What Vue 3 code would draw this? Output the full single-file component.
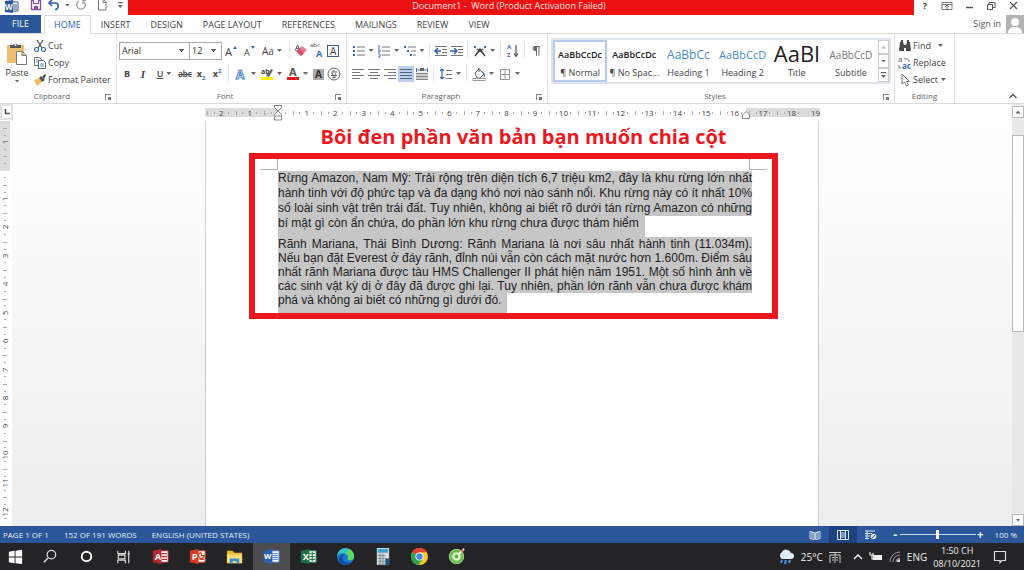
<script setup>
import { ref } from 'vue'

const tabs = ['HOME', 'INSERT', 'DESIGN', 'PAGE LAYOUT', 'REFERENCES', 'MAILINGS', 'REVIEW', 'VIEW']
const activeTab = ref('HOME')
const zoom = ref(50)
const fontName = ref('Arial')
const fontSize = ref('12')

// 14x14 glyphs used by the ribbon
const icons = {
  cut: '<path d="M4 1l5 8M10 1L5 9" stroke="#555" stroke-width="1.3" fill="none"/><circle cx="3.5" cy="10.5" r="2" stroke="#3b6db5" stroke-width="1.2" fill="none"/><circle cx="10.5" cy="10.5" r="2" stroke="#3b6db5" stroke-width="1.2" fill="none"/>',
  copy: '<path d="M1.500 1.500h5l2 2v6h-7z" fill="#fff" stroke="#777"/><path d="M5.500 4.500h5l2 2v6h-7z" fill="#fff" stroke="#666"/><path d="M7 8h4M7 10h4M3 4h2M3 6h2" stroke="#5b87c5"/>',
  painter: '<path d="M1 7l5-2 3 4-5 4z" fill="#f2bd62"/><path d="M6 5l2-2 4 4-3 2z" fill="#555"/><path d="M9 4l3-3 1 1-2 4z" fill="#444"/>',
  grow: '<text x="1" y="12" font-size="11" fill="#444">A</text><path d="M9 5l2-3 2 3z" fill="#3b6db5"/>',
  shrink: '<text x="2" y="12" font-size="9" fill="#444">A</text><path d="M9 2h4l-2 3z" fill="#3b6db5"/>',
  erase: '<path d="M2 7l6-5 5 4-6 6z" fill="#e8798a"/><path d="M2 7l3-2 5 4-3 3z" fill="#d44f66"/><path d="M1 7l2.500-6L6 6M2 4.500h3" stroke="#666" fill="none"/>',
  phonetic: '<text x="0" y="3" font-size="6" fill="#444">abc</text><text x="6" y="13" font-size="9" font-weight="bold" fill="#3b6db5">A</text>',
  charBorder: '<rect x="1.500" y="1.500" width="11" height="11" fill="#fff" stroke="#3f5f8f"/><text x="4" y="11" font-size="10" fill="#333">A</text>',
  effects: '<text x="2" y="12" font-size="12" font-weight="bold" fill="#fff" stroke="#4a86cc" stroke-width="1">A</text>',
  highlight: '<text x="1" y="7" font-size="7" font-weight="bold" fill="#444">ab</text><path d="M6 9l5-7 2 1-4 7z" fill="#666"/><rect x="1" y="10" width="12" height="3" fill="#fff200"/>',
  fontColor: '<text x="3" y="9" font-size="11" font-weight="bold" fill="#555">A</text><rect x="1" y="10" width="12" height="3" fill="#e01b1b"/>',
  charShade: '<rect x="2" y="2" width="11" height="11" fill="#a8a8a8"/><text x="4" y="11" font-size="10" font-weight="bold" fill="#333">A</text>',
  enclose: '<circle cx="7" cy="7" r="6" fill="#fff" stroke="#666"/><path d="M4 5h6M7 3v2M5 6l1 2M9 6l-1 2M4 8.500h6M7 8.500v3M5 11l4-1" stroke="#666" fill="none"/>',
  bullets: '<path d="M1 2h2v2h-2zM1 6h2v2h-2zM1 10h2v2h-2z" fill="#3b6db5"/><path d="M5 3h8M5 7h8M5 11h8" stroke="#777"/>',
  numbers: '<path d="M2 1v4M1 6h2v2h-2M1 10h2v3h-2" stroke="#3b6db5" fill="none"/><path d="M5 3h8M5 7h8M5 11h8" stroke="#777"/>',
  multi: '<path d="M1 2h2v2h-2zM4 6h2v2h-2zM7 10h2v2h-2z" fill="#3b6db5"/><path d="M5 3h8M8 7h5M10 11h3" stroke="#777"/>',
  outdent: '<path d="M1 2.500h12M8 5.500h5M8 8.500h5M1 11.500h12" stroke="#777"/><path d="M7 7H2M4 4L1 7l3 3" stroke="#2f62b0" stroke-width="1.500" fill="none"/>',
  indent: '<path d="M1 2.500h12M8 5.500h5M8 8.500h5M1 11.500h12" stroke="#777"/><path d="M0 7h6M4 4l3 3-3 3" stroke="#2f62b0" stroke-width="1.500" fill="none"/>',
  asian: '<path d="M2 12l5-7 5 7M4 5l6 4M10 5L4 9" stroke="#444" stroke-width="1.500" fill="none"/><path d="M1 2h2v2h-2zM11 2h2v2h-2z" fill="#3b6db5"/>',
  sort: '<text x="1" y="5" font-size="6" font-weight="bold" fill="#3b6db5">A</text><text x="1" y="13" font-size="6" font-weight="bold" fill="#7d5fb0">Z</text><path d="M10 1v11M8 9.500l2 3 2-3" stroke="#555" stroke-width="1.200" fill="none"/>',
  pilcrow: '<path d="M11 2.500H6a2 2 0 0 0 0 4h1.500M7.500 2.500v9M10 2.500v9" stroke="#666" fill="none"/><path d="M5 3h2v3h-2z" fill="#666"/>',
  left: '<path d="M1 2.500h12M1 5.500h8M1 8.500h12M1 11.500h8" stroke="#777"/>',
  center: '<path d="M1 2.500h12M3 5.500h8M1 8.500h12M3 11.500h8" stroke="#777"/>',
  right: '<path d="M1 2.500h12M5 5.500h8M1 8.500h12M5 11.500h8" stroke="#777"/>',
  justify: '<path d="M1 2.500h12M1 5.500h12M1 8.500h12M1 11.500h12" stroke="#56657a"/>',
  distribute: '<path d="M1 5.500h12v7H1z" fill="#ccc"/><path d="M1 6.500h12M1 9.500h12M1 12.500h12" stroke="#888"/><path d="M1.500 1v4M12.500 1v4M2 3h10" stroke="#4c6fa5"/><path d="M5 1h4v3h-4z" fill="#666"/>',
  spacing: '<path d="M3 2v10M1 4l2-2 2 2M1 10l2 2 2-2" stroke="#3b6db5" stroke-width="1.200" fill="none"/><path d="M7 3.500h6M7 7.500h6M7 11.500h6" stroke="#777"/>',
  shading: '<path d="M3 6l4-4 5 5-4 4H5z" fill="#fff" stroke="#666"/><path d="M7 5V1" stroke="#555"/><path d="M11 5c2 1 2 3 2 5l-2-2z" fill="#2f62b0"/><rect x="1" y="11.500" width="12" height="2" fill="#fff" stroke="#999"/>',
  borders: '<path d="M2 2.500h10M2 12.500h10M2.500 2v11M11.500 2v11M2 7.500h10M7 2v11" stroke="#999"/>',
  find: '<path d="M2 3h3l1 3h2l1-3h3l1 9H8V9H6v3H1z" fill="#4a4a4a"/><path d="M3 1h2v2H3zM9 1h2v2H9z" fill="#4a4a4a"/>',
  replace: '<text x="0" y="6" font-size="8" fill="#555">a</text><text x="4" y="13" font-size="8" font-weight="bold" fill="#3b6db5">ac</text><path d="M6 3c3-1 5 0 5 3M1 9v3h2" stroke="#777" fill="none"/>',
  select: '<path d="M4 1v10l2.500-2 2 4 2-1-2-3.500h3z" fill="#fff" stroke="#777"/>',
}

const fontRow1 = [
  { icon: 'grow', label: 'Grow Font', w: 'w18' },
  { icon: 'shrink', label: 'Shrink Font', w: 'w18' },
  { text: 'Aa', label: 'Change Case', w: 'w28', drop: true, cls: 'case' },
  { sep: true },
  { icon: 'erase', label: 'Clear Formatting', w: 'w16' },
  { icon: 'phonetic', label: 'Phonetic Guide', w: 'w16' },
  { icon: 'charBorder', label: 'Character Border', w: 'w16' },
]
const fontRow2 = [
  { text: 'B', label: 'Bold', w: 'w16', cls: 'bold' },
  { text: 'I', label: 'Italic', w: 'w16', cls: 'italic' },
  { text: 'U', label: 'Underline', w: 'w26', drop: true, cls: 'under' },
  { text: 'abc', label: 'Strikethrough', w: 'w16', cls: 'strike' },
  { text: 'x', sub: '2', label: 'Subscript', w: 'w16', cls: 'bold' },
  { text: 'x', sup: '2', label: 'Superscript', w: 'w16', cls: 'bold' },
  { sep: true },
  { icon: 'effects', label: 'Text Effects', w: 'w26', drop: true },
  { icon: 'highlight', label: 'Highlight Color', w: 'w26', drop: true },
  { icon: 'fontColor', label: 'Font Color', w: 'w26', drop: true },
  { icon: 'charShade', label: 'Character Shading', w: 'w16' },
  { icon: 'enclose', label: 'Enclose Characters', w: 'w16' },
]
const paraRow1 = [
  { icon: 'bullets', label: 'Bullets', w: 'w26', drop: true },
  { icon: 'numbers', label: 'Numbering', w: 'w26', drop: true },
  { icon: 'multi', label: 'Multilevel List', w: 'w26', drop: true },
  { sep: true },
  { icon: 'outdent', label: 'Decrease Indent', w: 'w16' },
  { icon: 'indent', label: 'Increase Indent', w: 'w16' },
  { sep: true },
  { icon: 'asian', label: 'Asian Layout', w: 'w26', drop: true },
  { sep: true },
  { icon: 'sort', label: 'Sort', w: 'w18' },
  { sep: true },
  { icon: 'pilcrow', label: 'Show Marks', w: 'w16' },
]
const paraRow2 = [
  { icon: 'left', label: 'Align Left', w: 'w16' },
  { icon: 'center', label: 'Center', w: 'w16' },
  { icon: 'right', label: 'Align Right', w: 'w16' },
  { icon: 'justify', label: 'Justify', w: 'w16', cls: 'on' },
  { icon: 'distribute', label: 'Distributed', w: 'w16' },
  { sep: true },
  { icon: 'spacing', label: 'Line Spacing', w: 'w26', drop: true },
  { sep: true },
  { icon: 'shading', label: 'Shading', w: 'w26', drop: true },
  { icon: 'borders', label: 'Borders', w: 'w26', drop: true },
]
const toolGroups = [
  { name: 'Font', rows: [fontRow1, fontRow2] },
  { name: 'Paragraph', rows: [paraRow1, paraRow2] },
]

const styles = [
  { sample: 'AaBbCcDc', name: '¶ Normal', cls: 'normal' },
  { sample: 'AaBbCcDc', name: '¶ No Spac...', cls: 'normal' },
  { sample: 'AaBbCc', name: 'Heading 1', cls: 'heading' },
  { sample: 'AaBbCcD', name: 'Heading 2', cls: 'heading2' },
  { sample: 'AaBl', name: 'Title', cls: 'title' },
  { sample: 'AaBbCcD', name: 'Subtitle', cls: 'subtitle' },
]
const activeStyle = ref('¶ Normal')

// ruler labels, zero is the left margin
const hMarks = Array.from({ length: 21 }, (_, i) => Math.abs(i - 2))
const vMarks = Array.from({ length: 14 }, (_, i) => Math.abs(i - 1))

const paragraphs = [
  [
    'Rừng Amazon, Nam Mỹ: Trải rộng trên diện tích 6,7 triệu km2, đây là khu rừng lớn nhất',
    'hành tinh với độ phức tạp và đa dạng khó nơi nào sánh nổi. Khu rừng này có ít nhất 10%',
    'số loài sinh vật trên trái đất. Tuy nhiên, không ai biết rõ dưới tán rừng Amazon có những',
    'bí mật gì còn ẩn chứa, do phần lớn khu rừng chưa được thám hiểm',
  ],
  [
    'Rãnh Mariana, Thái Bình Dương: Rãnh Mariana là nơi sâu nhất hành tinh (11.034m).',
    'Nếu bạn đặt Everest ở đáy rãnh, đỉnh núi vẫn còn cách mặt nước hơn 1.600m. Điểm sâu',
    'nhất rãnh Mariana được tàu HMS Challenger II phát hiện năm 1951. Một số hình ảnh về',
    'các sinh vật kỳ dị ở đây đã được ghi lại. Tuy nhiên, phần lớn rãnh vẫn chưa được khám',
    'phá và không ai biết có những gì dưới đó.',
  ],
]

const apps = [
  { name: 'Start', svg: '<path d="M3 5l6-1v6H3zM10 4l7-1v7h-7zM3 11h6v6l-6-1zM10 11h7v7l-7-1z" fill="#fff"/>' },
  { name: 'Search', svg: '<circle cx="12" cy="8" r="4.500" fill="none" stroke="#ddd" stroke-width="1.300"/><path d="M8.500 11.500L4 16" stroke="#ddd" stroke-width="1.500"/>' },
  { name: 'Cortana', svg: '<circle cx="10" cy="10" r="5" fill="none" stroke="#fff" stroke-width="2"/>' },
  { name: 'Task View', svg: '<path d="M4 4v3h8V4M4 17v-3h8v3M4.500 8.500h7v4h-7zM15.500 4v2M15.500 9v8" fill="none" stroke="#ddd" stroke-width="1.200"/><path d="M14.500 6h2v3h-2z" fill="#ddd"/>' },
  { name: 'Access', svg: '<path d="M9 4h9v12H9z" fill="#fff" stroke="#c22f38"/><path d="M11 7h6M11 10h6M11 13h6" stroke="#c22f38" stroke-width="1.500"/><path d="M2 4l9-2v16l-9-2z" fill="#b72832"/><text x="4" y="14" font-size="10" font-weight="bold" fill="#fff">A</text>' },
  { name: 'PowerPoint', svg: '<path d="M9 4h9v12H9z" fill="#fff" stroke="#e0482a"/><path d="M14 6v3h3a3 3 0 1 1-3-3M12 13h5" stroke="#d24726" stroke-width="1.300" fill="none"/><path d="M2 4l9-2v16l-9-2z" fill="#d83b22"/><text x="4" y="14" font-size="10" font-weight="bold" fill="#fff">P</text>' },
  { name: 'Explorer', svg: '<path d="M2 4h6l2 2h8v11H2z" fill="#e9b93c"/><path d="M2 8h16v9H2z" fill="#fbdc73"/><path d="M5 17v-5h10v5h-3v-2H8v2z" fill="#3f8fd6"/>' },
  { name: 'Word', svg: '<path d="M9 4h9v12H9z" fill="#fff" stroke="#3f74c4"/><path d="M11 7h6M11 9h6M11 11h6M11 13h6" stroke="#3f74c4"/><path d="M2 4l9-2v16l-9-2z" fill="#2b62b5"/><text x="2" y="13" font-size="8" font-weight="bold" fill="#fff">W</text>', active: true },
  { name: 'Excel', svg: '<path d="M9 4h9v12H9z" fill="#fff" stroke="#2a8a55"/><path d="M11 7h6M11 10h6M11 13h6M14 5v10" stroke="#2a8a55" stroke-width="1.300"/><path d="M2 4l9-2v16l-9-2z" fill="#1e7145"/><text x="4" y="14" font-size="10" font-weight="bold" fill="#fff">X</text>' },
  { name: 'Edge', svg: '<circle cx="10" cy="10" r="9" fill="#1779cf"/><path d="M1 10a9 9 0 0 1 18 0c0 4-5 5-7 3 2-2 1-5-2-6-4-1-8 0-9 3z" fill="#39c6c0"/><path d="M10 7c3 1 4 4 2 6 2 2 7 1 7-3a9 9 0 0 0-5-8z" fill="#63d85e"/><path d="M7 11c0 4 4 6 9 5-4 5-12 3-13-3 0-3 3-6 7-6-2 1-3 2-3 4z" fill="#134f9e"/>' },
  { name: 'Calculator', svg: '<path d="M4 1h13v18H4z" fill="#d8dde0"/><path d="M5 2h11v4H5z" fill="#3ca0cc"/><path d="M5 9h8M5 12h8M5 15h8M5 18h8M7.500 7v12M10.500 7v12" stroke="#7b8790"/><path d="M13 12h4v7h-4z" fill="#25507e"/>' },
  { name: 'Chrome', svg: '<circle cx="10" cy="10" r="9" fill="#fbc926"/><path d="M10 10L2.200 5.500A9 9 0 0 1 17.800 5.500H10z" fill="#e4402f"/><path d="M10 10L2.200 5.500A9 9 0 0 0 9 19l5-7z" fill="#2fa24f"/><circle cx="10" cy="10" r="4.300" fill="#fff"/><circle cx="10" cy="10" r="3.400" fill="#4285e8"/>' },
  { name: 'Coc Coc', svg: '<circle cx="10" cy="10" r="8" fill="#dff2d2"/><circle cx="10" cy="10" r="6" fill="none" stroke="#6abf4b" stroke-width="3"/><circle cx="10" cy="10" r="2" fill="#58b13a"/><path d="M12 8l6-6" stroke="#f4fbf0" stroke-width="2"/><circle cx="16" cy="4" r="1.300" fill="#e0574f"/>' },
]
</script>

<template>
  <div class="word">
    <header class="titlebar">
      <div class="quick">
        <svg class="q-word" width="16" height="14" viewBox="0 0 16 14"><path d="M7 2h7v9H7z" fill="#fff" stroke="#2b579a" /><path d="M9 5h4M9 7h4M9 9h4" stroke="#2b579a" /><path d="M1 1l8-1v13l-8-1z" fill="#2b579a" /><text x="1" y="10" font-size="8" font-weight="bold" fill="#fff">W</text></svg>
        <button aria-label="Save"><svg width="12" height="12" viewBox="0 0 12 12"><path d="M1.500 1.500h9v9h-9z" fill="#fff" stroke="#8a4fa0" stroke-width="1.400" /><path d="M3 1h6v4H3zM4 7h4v4H4z" fill="#8a4fa0" /><path d="M4 1h4v3H4z" fill="#fff" /></svg></button>
        <button aria-label="Undo" class="undo"><svg width="12" height="12" viewBox="0 0 12 12"><path d="M1 4h6a3 3 0 0 1 0 6.500M4 1L1 4l3 3" fill="none" stroke="#3762a8" stroke-width="1.700" /></svg><i class="caret"></i></button>
        <button aria-label="Repeat"><svg width="12" height="12" viewBox="0 0 12 12"><path d="M8 2a4.300 4.300 0 1 1-4 0M8 5V1.500h3" fill="none" stroke="#999" stroke-width="1.200" /></svg></button>
        <button aria-label="New"><svg width="12" height="12" viewBox="0 0 12 12"><path d="M2.500 0.500h5l2.500 2.500v8h-7.500zM7 0.500V3.500h3" fill="#fff" stroke="#777" /></svg></button>
        <button aria-label="Customize" class="more"><i class="caret lined"></i></button>
      </div>
      <h1>Document1 -&nbsp; Word (Product Activation Failed)</h1>
      <div class="winctl">
        <button aria-label="Help">?</button>
        <button aria-label="Ribbon Display Options"><svg width="12" height="10" viewBox="0 0 12 10"><path d="M1 1.500h10v7H1zM1 3.500h10M6 8V4.500M4 6l2-2 2 2" fill="none" stroke="#777" /></svg></button>
        <button aria-label="Minimize"><svg width="10" height="10" viewBox="0 0 10 10"><path d="M2 6.500h7" stroke="#555" stroke-width="1.500" /></svg></button>
        <button aria-label="Restore"><svg width="10" height="10" viewBox="0 0 10 10"><path d="M3 3V1.500h6v5H7M1.500 3.500h5v5h-5z" fill="none" stroke="#555" /></svg></button>
        <button aria-label="Close"><svg width="10" height="10" viewBox="0 0 10 10"><path d="M2 1l7 7M9 1L2 8" stroke="#555" stroke-width="1.200" /></svg></button>
      </div>
    </header>

    <nav class="tabs">
      <button class="file">FILE</button>
      <button
        v-for="tab in tabs"
        :key="tab"
        :class="['tab', { active: activeTab === tab }]"
        @click="activeTab = tab"
      >{{ tab }}</button>
      <a href="#" class="signin">Sign in</a>
      <svg class="avatar" width="18" height="18" viewBox="0 0 18 18"><path d="M0 0h18v18H0z" fill="#b4b4b4" /><circle cx="9" cy="7" r="4" fill="#fff" /><path d="M2 18c0-4 3-6 7-6s7 2 7 6z" fill="#fff" /></svg>
    </nav>

    <section class="ribbon">
      <div class="group clipboard">
        <div class="body">
          <button class="paste">
            <svg width="22" height="24" viewBox="0 0 22 24"><path d="M1 3h17v18H1z" fill="#eebf73" /><path d="M4 6V3h3a3 3 0 0 1 5 0h3v3z" fill="#555" /><circle cx="9.500" cy="3" r="1" fill="#fff" /><path d="M10.500 9.500h6l4 4v9h-10zM16 9.500v4h4" fill="#fff" stroke="#777" /></svg>
            <span>Paste</span>
            <i class="caret"></i>
          </button>
          <div class="stack">
            <button><svg width="14" height="14" viewBox="0 0 14 14" v-html="icons.cut"></svg>Cut</button>
            <button><svg width="14" height="14" viewBox="0 0 14 14" v-html="icons.copy"></svg>Copy</button>
            <button><svg width="14" height="14" viewBox="0 0 14 14" v-html="icons.painter"></svg>Format Painter</button>
          </div>
        </div>
        <footer>Clipboard<i class="launch"></i></footer>
      </div>

      <div v-for="g in toolGroups" :key="g.name" :class="['group', 'tools', g.name.toLowerCase()]">
        <div class="rows">
          <div v-for="(row, r) in g.rows" :key="r" class="row">
            <template v-if="g.name === 'Font' && r === 0">
              <select v-model="fontName" class="fname" aria-label="Font"><option>Arial</option></select>
              <select v-model="fontSize" class="fsize" aria-label="Font Size"><option>12</option></select>
            </template>
            <template v-for="(t, i) in row" :key="i">
              <span v-if="t.sep" class="sep"></span>
              <button v-else :class="['tool', t.w, t.cls]" :aria-label="t.label">
                <svg v-if="t.icon" width="14" height="14" viewBox="0 0 14 14" v-html="icons[t.icon]"></svg>
                <span v-else class="glyph">{{ t.text }}<sub v-if="t.sub">{{ t.sub }}</sub><sup v-if="t.sup">{{ t.sup }}</sup></span>
                <i v-if="t.drop" class="caret"></i>
              </button>
            </template>
          </div>
        </div>
        <footer>{{ g.name }}<i class="launch"></i></footer>
      </div>

      <div class="group styles">
        <div class="gallery">
          <button
            v-for="s in styles"
            :key="s.name"
            :class="['style', { picked: activeStyle === s.name }]"
            @click="activeStyle = s.name"
          >
            <span :class="['sample', s.cls]">{{ s.sample }}</span>
            <span class="style-name">{{ s.name }}</span>
          </button>
          <div class="scroller">
            <button aria-label="Row Up"><i class="caret up dim"></i></button>
            <button aria-label="Row Down"><i class="caret"></i></button>
            <button aria-label="More"><i class="caret lined"></i></button>
          </div>
        </div>
        <footer>Styles<i class="launch"></i></footer>
      </div>

      <div class="group editing">
        <div class="stack">
          <button><svg width="14" height="14" viewBox="0 0 14 14" v-html="icons.find"></svg>Find<i class="caret far"></i></button>
          <button><svg width="14" height="14" viewBox="0 0 14 14" v-html="icons.replace"></svg>Replace</button>
          <button><svg width="14" height="14" viewBox="0 0 14 14" v-html="icons.select"></svg>Select<i class="caret"></i></button>
        </div>
        <footer>Editing</footer>
      </div>
      <button class="collapse" aria-label="Collapse the Ribbon"><svg width="10" height="8" viewBox="0 0 10 8"><path d="M1.500 6L5 2.500 8.500 6" fill="none" stroke="#555" stroke-width="1.400" /></svg></button>
    </section>

    <main class="work">
      <div class="desk">
        <div class="hbar">
          <button class="tabstop" aria-label="Left Tab"><svg width="6" height="6" viewBox="0 0 6 6"><path d="M1.500 0v4.500H6" fill="none" stroke="#555" stroke-width="1.600" /></svg></button>
          <div class="hwrap">
            <div class="hruler">
              <span v-for="(n, i) in hMarks" :key="i" class="mark">
                <template v-if="n">{{ n }}</template>
                <svg v-else class="indent" width="8" height="16" viewBox="0 0 8 16"><path d="M0.500 0.500h7v2L4 6 0.500 2.500zM4 6l3.500 3.500v5.500h-7V9.500zM0.500 11h7" fill="#fff" stroke="#888" /></svg>
              </span>
              <span class="last">19</span>
              <svg class="rindent" width="8" height="8" viewBox="0 0 8 8"><path d="M4 0.500L7.500 4v3.500h-7V4z" fill="#fff" stroke="#888" /></svg>
            </div>
          </div>
        </div>
        <div class="canvas">
          <div class="vruler">
            <span v-for="(n, i) in vMarks" :key="i" class="vmark"><b v-if="n">{{ n }}</b></span>
          </div>
          <div class="bench">
            <article class="page">
              <h2>Bôi đen phần văn bản bạn muốn chia cột</h2>
              <div class="frame">
                <div class="crop"><i class="tl"></i><i class="tr"></i></div>
                <div v-for="(p, i) in paragraphs" :key="i" :class="['para', 'p' + i]">
                  <p v-for="line in p" :key="line">{{ line }}</p>
                </div>
              </div>
            </article>
          </div>
        </div>
      </div>
      <div class="vscroll">
        <button aria-label="Scroll Up"><i class="caret up"></i></button>
        <div class="track"><div class="thumb"></div></div>
        <button aria-label="Scroll Down"><i class="caret"></i></button>
      </div>
    </main>

    <div class="status">
      <span>PAGE 1 OF 1</span>
      <span>152 OF 191 WORDS</span>
      <span>ENGLISH (UNITED STATES)</span>
      <div class="views">
        <button aria-label="Read Mode"><svg width="12" height="10" viewBox="0 0 12 10"><path d="M1 1.500l4 1v7l-4-1zM11 1.500l-4 1v7l4-1zM6 2v8M3 2v6M9 2v6" fill="none" stroke="#dbe6f5" /></svg></button>
        <button class="on" aria-label="Print Layout"><svg width="12" height="10" viewBox="0 0 12 10"><path d="M0.500 0.500h11v9h-11zM3.500 1v8M8.500 1v8M4 3h4M4 5h4M4 7h4" fill="none" stroke="#dbe6f5" /></svg></button>
        <button aria-label="Web Layout"><svg width="12" height="10" viewBox="0 0 12 10"><path d="M0 1h10M0 3.500h7M0 6h5M0 8.500h4M2 1v8" fill="none" stroke="#dbe6f5" /><circle cx="8.500" cy="6.500" r="2.800" fill="#dbe6f5" /><path d="M7 8l3-3" stroke="#2b579a" /></svg></button>
      </div>
      <button class="zoom-btn" aria-label="Zoom Out">-</button>
      <input v-model="zoom" type="range" min="0" max="100" aria-label="Zoom">
      <button class="zoom-btn" aria-label="Zoom In">+</button>
      <span class="pct">100 %</span>
    </div>

    <div class="taskbar">
      <button v-for="a in apps" :key="a.name" :class="['app', { active: a.active }]" :aria-label="a.name">
        <svg width="19" height="19" viewBox="0 0 20 20" v-html="a.svg"></svg>
      </button>
      <div class="tray">
        <svg width="18" height="18" viewBox="0 0 18 18"><path d="M5 11a4 4 0 0 1 0-7 5 5 0 0 1 9 1 3 3 0 0 1 0 6z" fill="#dcecf8" /><path d="M5 12l-1 3M9 12l-1 4M13 12l-1 3" stroke="#4a9ae8" stroke-width="2" /></svg>
        <span class="temp">25°C</span>
        <svg class="ime" width="12" height="12" viewBox="0 0 12 12"><path d="M0 1.500h12M1 4h10v8M1 4v8M6 1v11M3 6.500h2M7 6.500h2M3 9h2M7 9h2" fill="none" stroke="#ccc" /></svg>
        <svg class="chev" width="10" height="8" viewBox="0 0 10 8"><path d="M1 6l4-4 4 4" fill="none" stroke="#fff" stroke-width="1.300" /></svg>
        <svg width="14" height="12" viewBox="0 0 14 12"><path d="M4 4h9v5H4z" fill="#eee" /><path d="M1 1v3h3V2M3 4v4h2" fill="none" stroke="#eee" stroke-width="1.200" /></svg>
        <svg width="12" height="12" viewBox="0 0 12 12"><path d="M1 11A10 10 0 0 1 11 1M4 11a7 7 0 0 1 7-7M7 11a4 4 0 0 1 4-4" fill="none" stroke="#999" /><path d="M8 11a3 3 0 0 1 3-3v3z" fill="#ddd" /></svg>
        <span class="lang">ENG</span>
        <time><span>1:50 CH</span><span>08/10/2021</span></time>
        <svg class="note" width="14" height="14" viewBox="0 0 14 14"><path d="M1.500 1.500h11v9H9l-2 2v-2H1.500z" fill="none" stroke="#ddd" stroke-width="1.200" /></svg>
      </div>
    </div>
  </div>
</template>

<style>
body {
  margin: 0;
  background: #fff;
}
</style>

<style scoped>
.word {
  display: flex;
  flex-direction: column;
  min-height: 100vh;
  font-family: 'Open Sans', 'Noto Sans', sans-serif;
  font-size: 9px;
  line-height: 12px;
  color: #444;
  overflow: hidden;
}
* {
  box-sizing: border-box;
}
button {
  display: flex;
  align-items: center;
  justify-content: center;
  padding: 0;
  border: 0;
  background: none;
  font: inherit;
  color: inherit;
  cursor: pointer;
}
svg {
  display: block;
  flex: none;
  overflow: visible;
}
.caret {
  flex: none;
  width: 5px;
  height: 3px;
  background: #666;
  clip-path: polygon(0 0, 100% 0, 50% 100%);
}
.caret.up {
  clip-path: polygon(50% 0, 100% 100%, 0 100%);
}
.caret.dim {
  background: #bbb;
}
.caret.lined {
  height: 6px;
  clip-path: polygon(0 0, 100% 0, 100% 20%, 0 20%, 0 50%, 100% 50%, 50% 100%, 0 50%);
}

/* title bar */
.titlebar {
  display: flex;
  height: 15px;
}
.quick {
  display: flex;
  align-items: flex-start;
  width: 128px;
  padding-left: 4px;
}
.q-word {
  margin-right: 6px;
}
.quick button {
  height: 10px;
  width: 24px;
}
.quick .undo {
  width: 28px;
  gap: 5px;
}
.quick .more {
  width: 18px;
}
.titlebar h1 {
  flex: 1;
  margin: 0;
  padding-right: 24px;
  background: #ee1111;
  color: #ffe3e3;
  font-size: 9px;
  font-weight: 400;
  line-height: 12px;
  text-align: center;
}
.winctl {
  display: flex;
  align-items: flex-start;
  width: 110px;
}
.winctl button {
  flex: 1;
  height: 12px;
  font-weight: 700;
}

/* tabs */
.tabs {
  display: flex;
  height: 19px;
  border-bottom: 1px solid #d9d9d9;
}
.tabs .file {
  width: 41px;
  height: 18px;
  margin-right: 3px;
  background: #2b579a;
  color: #fff;
}
.tab {
  height: 19px;
  padding: 0 9px;
  border: 1px solid transparent;
}
.tab.active {
  border-color: #d9d9d9;
  border-bottom-color: #fff;
  background: #fff;
  color: #2b66b5;
}
.signin {
  margin-left: auto;
  margin-right: 5px;
  line-height: 18px;
  color: #555;
  text-decoration: none;
}

/* ribbon */
.ribbon {
  display: flex;
  height: 70px;
  border-bottom: 1px solid #d9d9d9;
}
.group {
  display: flex;
  flex-direction: column;
  justify-content: space-between;
  padding: 3px 3px 0;
  border-right: 1px solid #e4e4e4;
}
.group footer {
  position: relative;
  height: 13px;
  padding-right: 12px;
  color: #666;
  font-size: 8px;
  text-align: center;
}
.group.editing footer {
  padding-right: 0;
}
.launch {
  position: absolute;
  right: 2px;
  top: 4px;
  width: 6px;
  height: 6px;
  border-top: 1px solid #888;
  border-left: 1px solid #888;
  background: linear-gradient(#777, #777) right bottom / 3px 3px no-repeat;
}
.clipboard {
  width: 117px;
}
.body {
  display: flex;
}
.paste {
  flex-direction: column;
  width: 28px;
  height: 50px;
  margin-right: 2px;
  gap: 1px;
}
.stack {
  display: flex;
  flex-direction: column;
}
.stack button {
  height: 17px;
  justify-content: flex-start;
  gap: 1px;
  white-space: nowrap;
}
.stack .caret {
  margin-left: 2px;
}
.stack .caret.far {
  margin-left: 6px;
}
.rows {
  display: flex;
  flex-direction: column;
  gap: 6px;
  padding-top: 5px;
}
.row {
  display: flex;
  align-items: center;
  height: 17px;
}
.font {
  width: 230px;
  padding-left: 2px;
}
.paragraph {
  width: 201px;
}
select {
  height: 18px;
  padding: 0 2px;
  border: 1px solid #ababab;
  border-radius: 0;
  appearance: none;
  font: inherit;
  color: #333;
  background: conic-gradient(from -45deg at 50% 100%, #666 90deg, transparent 0) right 5px center / 5px 3px no-repeat, #fff;
}
.fname {
  width: 71px;
}
.fsize {
  width: 33px;
  margin-left: -1px;
}
.tool {
  height: 16px;
  gap: 3px;
}
.tool.on {
  background: #b9d0ee;
}
.w16 {
  width: 16px;
}
.w18 {
  width: 18px;
}
.w26 {
  width: 26px;
}
.w28 {
  width: 28px;
}
.sep {
  width: 1px;
  height: 15px;
  margin: 0 3px;
  background: #e4e4e4;
}
.case .glyph {
  font-size: 10px;
}
.bold .glyph {
  font-weight: 700;
}
.italic .glyph {
  font-family: 'Liberation Serif', serif;
  font-size: 11px;
  font-style: italic;
  font-weight: 700;
}
.under .glyph {
  font-weight: 600;
  text-decoration: underline;
}
.strike .glyph {
  font-size: 8px;
  font-weight: 600;
  text-decoration: line-through;
}
sub,
sup {
  font-size: 6px;
  line-height: 0;
  color: #3b6db5;
}

/* styles gallery */
.styles {
  flex: 0 1 347px;
}
.gallery {
  display: flex;
  height: 46px;
  margin-top: 1px;
  border: 2px solid #dfe3ea;
}
.style {
  flex: 1;
  flex-direction: column;
  min-width: 0;
  border: 2px solid transparent;
}
.style.picked {
  border-color: #b5cbea;
}
.sample {
  width: 100%;
  height: 24px;
  line-height: 24px;
  white-space: nowrap;
}
.style-name {
  white-space: nowrap;
}
.sample.normal {
  font-weight: 600;
  color: #222;
}
.heading,
.heading2 {
  color: #4a8cc9;
  font-size: 12px;
}
.heading2 {
  font-size: 11px;
}
.sample.title {
  font-size: 22px;
  line-height: 20px;
  color: #222;
}
.sample.subtitle {
  font-size: 10px;
  color: #777;
}
.scroller {
  display: flex;
  flex-direction: column;
  width: 11px;
}
.scroller button {
  flex: 1;
  border: 1px solid #ccc;
}
.editing {
  width: 60px;
}
.collapse {
  align-self: flex-end;
  width: 22px;
  height: 14px;
  margin-left: auto;
}

/* workspace */
.work {
  flex: 1;
  display: flex;
}
.desk {
  flex: 1;
  display: flex;
  flex-direction: column;
}
.hbar {
  display: flex;
  height: 17px;
}
.tabstop {
  width: 13px;
  height: 16px;
  border: 2px solid #e2e2e2;
}
.hwrap {
  flex: 1;
  display: flex;
  justify-content: center;
  align-items: center;
}
.hruler {
  position: relative;
  display: flex;
  flex: 0 1 615px;
  height: 9px;
  padding-left: 2px;
  background: linear-gradient(90deg, #dcdcdc 12%, #fff 12%, #fff 88%, #dcdcdc 88%);
  font-size: 8px;
  line-height: 9px;
}
.mark {
  flex: 2;
  display: flex;
  justify-content: center;
  align-items: center;
  background:
    linear-gradient(#aaa, #aaa) left center / 1px 4px no-repeat,
    linear-gradient(#aaa, #aaa) 25% center / 1px 2px no-repeat,
    linear-gradient(#aaa, #aaa) 75% center / 1px 2px no-repeat;
}
.last {
  flex: 1;
  text-align: right;
}
.rindent {
  position: absolute;
  left: 88%;
  top: 3px;
  margin-left: -4px;
}
.canvas {
  flex: 1;
  display: flex;
}
.vruler {
  display: flex;
  flex-direction: column;
  width: 12px;
  padding-top: 7px;
  border-right: 2px solid #fff;
  background: linear-gradient(#dcdcdc 50px, #fff 50px);
  font-size: 8px;
  line-height: 8px;
}
.vmark {
  flex: 1;
  display: flex;
  align-items: center;
  justify-content: center;
  background:
    linear-gradient(#aaa, #aaa) center top / 4px 1px no-repeat,
    linear-gradient(#aaa, #aaa) center 25% / 2px 1px no-repeat,
    linear-gradient(#aaa, #aaa) center 75% / 2px 1px no-repeat;
}
.vmark b {
  font-weight: 400;
  transform: rotate(-90deg);
}
.bench {
  flex: 1;
  display: flex;
  justify-content: center;
  background: linear-gradient(#fff, #ededed);
}
.page {
  flex: 0 1 614px;
  min-width: 0;
  padding: 0 40px 0 43px;
  border: 1px solid #d0d0d0;
  border-width: 0 1px;
  background: #fff;
}
.page h2 {
  margin: 0;
  height: 32px;
  padding-left: 20px;
  color: #ee1720;
  font-family: 'Open Sans', sans-serif;
  font-size: 20px;
  font-weight: 700;
  line-height: 32px;
  text-align: center;
  white-space: nowrap;
}
.frame {
  padding: 0 20px 0 23px;
  border: 6px solid #ee1720;
}
.crop {
  display: flex;
  justify-content: space-between;
  height: 12px;
  margin: 0 -15px 0 -18px;
}
.crop i {
  width: 18px;
  height: 11px;
  border-bottom: 1px solid #b5b5b5;
}
.crop .tl {
  border-right: 1px solid #b5b5b5;
}
.crop .tr {
  border-left: 1px solid #b5b5b5;
}
.para {
  display: flex;
  flex-direction: column;
  font-family: 'Liberation Sans', Arial, sans-serif;
  font-size: 12px;
  color: #222;
}
.para p {
  margin: 0;
  background: #c6c6c6;
  line-height: 14px;
  text-align-last: justify;
  white-space: nowrap;
}
.p0 p {
  line-height: 15px;
}
.para p:last-child {
  align-self: flex-start;
  padding-right: 6px;
  padding-bottom: 6px;
  text-align-last: left;
}
.vscroll {
  display: flex;
  flex-direction: column;
  width: 12px;
  padding-top: 2px;
  background: #e8e8e8;
}
.vscroll button {
  height: 12px;
  border: 1px solid #b8b8b8;
  background: #fff;
}
.track {
  flex: 1;
  padding-top: 17px;
}
.thumb {
  height: 52%;
  border: 1px solid #b8b8b8;
  background: #fff;
}

/* status bar */
.status {
  display: flex;
  align-items: center;
  height: 17px;
  padding: 0 7px 0 3px;
  background: #2b579a;
  color: #e8eef7;
  font-size: 8px;
}
.status > span {
  margin-right: 15px;
}
.views {
  display: flex;
  margin-left: auto;
  margin-right: 6px;
}
.views button {
  width: 28px;
  height: 17px;
}
.views .on {
  background: #1c4280;
}
.zoom-btn {
  width: 9px;
  font-size: 12px;
  font-weight: 700;
}
.status input {
  width: 76px;
  height: 12px;
  margin: 0;
  appearance: none;
  background: linear-gradient(#c9d8ee, #c9d8ee) center / 100% 1px no-repeat;
}
.status input::-webkit-slider-thumb {
  appearance: none;
  width: 3px;
  height: 9px;
  background: #fff;
}
.status .pct {
  margin: 0 0 0 10px;
}

/* taskbar */
.taskbar {
  display: flex;
  height: 27px;
  background: #242325;
  color: #eee;
}
.app {
  width: 37px;
  height: 27px;
}
.app:first-child {
  width: 31px;
}
.app.active {
  background: #4d4d50;
}
.tray {
  display: flex;
  align-items: center;
  margin-left: auto;
  padding-right: 17px;
  gap: 6px;
  font-size: 10px;
}
.chev {
  margin-left: 6px;
}
.tray time {
  display: flex;
  flex-direction: column;
  align-items: center;
  font-size: 9px;
  line-height: 13px;
}
.note {
  margin-left: 6px;
}
</style>
